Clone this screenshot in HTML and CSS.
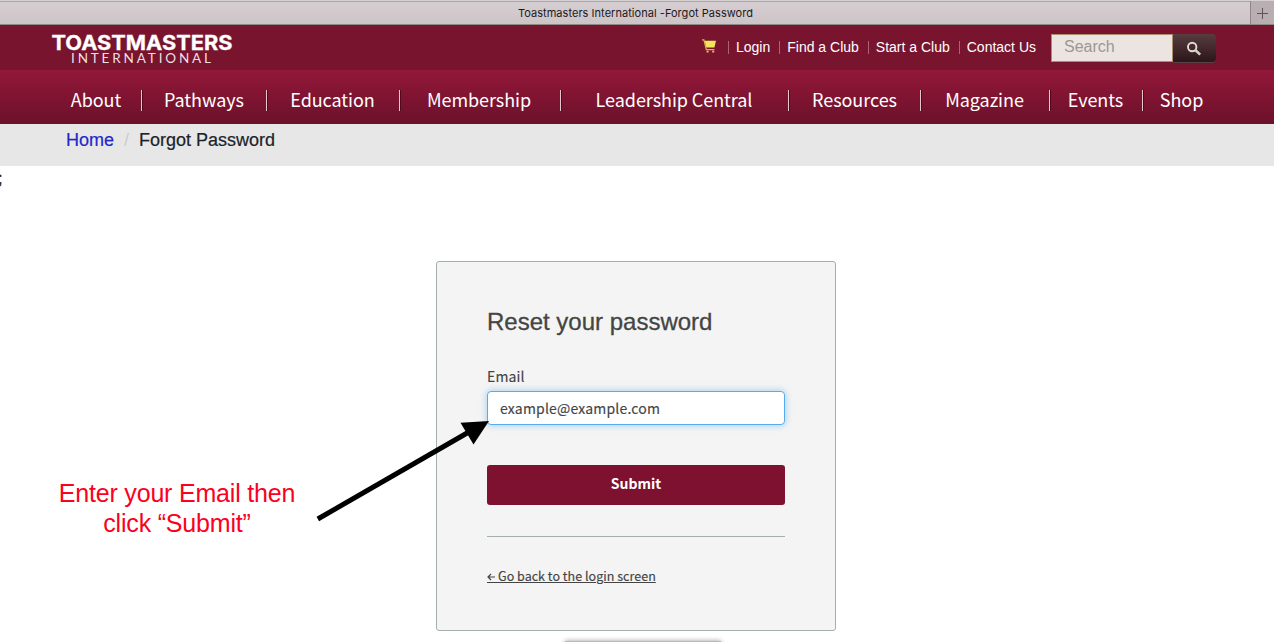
FILE: index.html
```
<!DOCTYPE html>
<html lang="en">
<head>
<meta charset="utf-8">
<title>Toastmasters International -Forgot Password</title>
<link rel="stylesheet" href="styles.css">
</head>
<body>
<div class="tabbar">
  <div class="tab"><span class="tab-title">Toastmasters International -Forgot Password</span></div>
  <div class="new-tab"><svg width="12" height="12" viewBox="0 0 12 12"><path d="M5.5 0V11M0 5.5H11" stroke="#5c5459" stroke-width="1" fill="none"/></svg></div>
</div>
<header class="top">
  <svg class="logo" width="184" height="36" viewBox="0 0 184 36">
    <text class="logo-main" x="0.5" y="18.6" textLength="181" lengthAdjust="spacingAndGlyphs">TOASTMASTERS</text>
    <text class="logo-sub" x="20" y="31.6" textLength="140">INTERNATIONAL</text>
  </svg>
  <div class="tools">
    <svg class="cart" width="15" height="14" viewBox="0 0 15 14"><path d="M0 0.8H1.9L4.3 10.6H12.5" fill="none" stroke="#dcb04c" stroke-width="1.2"/><path d="M2.6 1.8H14L12.4 8.6H4.4Z" fill="#f2e55c"/><path d="M4.6 12.7H6.6M10.2 12.7H12.2" stroke="#e8c658" stroke-width="1.8"/></svg>
    <a class="util">Login</a><a class="util">Find a Club</a><a class="util">Start a Club</a><a class="util">Contact Us</a>
    <div class="search"><div class="search-field">Search</div><div class="search-btn"><svg width="16" height="16" viewBox="0 0 16 16"><circle cx="6.2" cy="6" r="4.2" fill="none" stroke="#e2ddd3" stroke-width="1.9"/><path d="M9.3 9L14.2 13.6" stroke="#d5d0c2" stroke-width="2.6"/></svg></div></div>
  </div>
</header>
<nav class="nav">
  <a class="w1">About</a><a class="w2">Pathways</a><a class="w3">Education</a><a class="w4">Membership</a><a class="w5">Leadership Central</a><a class="w6">Resources</a><a class="w7">Magazine</a><a class="w8">Events</a><a class="w9">Shop</a>
</nav>
<div class="crumbs"><a class="home">Home</a><span class="slash">/</span><span class="here">Forgot Password</span></div>
<main class="main">
  <span class="stray">;</span>
  <section class="card">
    <h1>Reset your password</h1>
    <div class="label">Email</div>
    <div class="field">example@example.com</div>
    <div class="submit">Submit</div>
    <div class="rule"></div>
    <a class="back"><svg class="back-arrow" width="8" height="8" viewBox="0 0 8 8"><path d="M8 4H1M4 1L1 4L4 7" fill="none" stroke="#444" stroke-width="1.2"/></svg>Go back to the login screen</a>
  </section>
  <p class="note">Enter your Email then<br>click “Submit”</p>
  <svg class="arrow" width="180" height="110" viewBox="0 0 180 110"><path d="M7.8 104L158 17.5" stroke="#000" stroke-width="5" fill="none"/><path d="M179 6L150.5 7.8L163.5 29.5Z"/></svg>
  <div class="sheet-edge"></div>
</main>
</body>
</html>
```
FILE: styles.css
```
* { box-sizing: border-box; }
body { margin: 0; width: 1274px; height: 642px; overflow: hidden; background: #fff; font-family: "Liberation Sans", Arial, sans-serif; }
.tabbar { display: flex; height: 25px; border-bottom: 1px solid #8f8a86; background: linear-gradient(#d6cfd2, #cdc4c8); box-shadow: inset 0 1px #d5d0d2, inset 0 2px #aca6a8; }
.tab { flex: 1; text-align: center; padding-left: 21px; }
.tab-title { font: 11px/26px Inter, sans-serif; letter-spacing: 0.04px; color: #1d1820; }
.new-tab { width: 24px; margin-top: 1px; padding: 7px 0 0 6px; border-left: 1px solid #8f8689; background: #b9afb3; }
.new-tab svg { display: block; }
.top { display: flex; justify-content: space-between; height: 45px; background: #79142e; padding: 6px 58px 0 51px; }
.logo { display: block; overflow: visible; }
.logo-main { font: 700 20.5px Inter, sans-serif; fill: #fff; stroke: #fff; stroke-width: 0.3px; }
.logo-sub { font: 400 13.5px Lato, sans-serif; fill: #f0dfe3; }
.tools { display: flex; }
.cart { margin: 8px 11px 0 0; }
.util { height: 13px; margin-top: 10px; padding-left: 7px; margin-right: 9px; border-left: 1px solid #b0607a; font-size: 14px; line-height: 12px; color: #fff; white-space: nowrap; }
.search { display: flex; margin: 3px 0 0 6px; }
.search-field { width: 122px; height: 28px; border: 1px solid #a98f6d; background: #ebe4e0; padding-left: 12px; font-size: 16px; line-height: 24px; color: #9b9897; }
.search-btn { width: 43px; height: 29px; padding: 7px 0 0 13px; border-radius: 0 4px 4px 0; border-bottom: 1px solid #594044; background: linear-gradient(#573c40, #2b1619); }
.nav { display: flex; height: 54px; padding: 20px 0 0 51px; background: linear-gradient(#931739, #6c112a); }
.nav a { height: 21px; border-right: 1px solid #e8c6cf; box-shadow: 1px 0 #4f0b1e; font: 18px/18px "Noto Sans CJK JP", sans-serif; letter-spacing: -0.06px; color: #fff; text-align: center; white-space: nowrap; }
.nav .w1 { width: 91px; }
.nav .w2 { width: 125px; }
.nav .w3 { width: 133px; padding-right: 1px; }
.nav .w4 { width: 161px; padding-right: 2px; }
.nav .w5 { width: 228px; padding-right: 1px; }
.nav .w6 { width: 132px; }
.nav .w7 { width: 129px; padding-right: 1px; }
.nav .w8 { width: 93px; padding-right: 1px; }
.nav .w9 { width: 78px; padding-right: 1px; border: 0; box-shadow: none; }
.crumbs { display: flex; height: 42px; padding: 6px 0 0 66px; background: #e7e7e7; font-size: 18px; line-height: 20px; }
.home { color: #2229c9; -webkit-text-stroke: 0.2px; }
.slash { width: 25px; text-align: center; color: #ccc; }
.here { color: #1b2228; -webkit-text-stroke: 0.2px; }
.main { position: relative; height: 476px; overflow: hidden; }
.stray { position: absolute; left: -2px; top: 3px; font-size: 16px; line-height: 20px; color: #222; -webkit-text-stroke: 0.4px; }
.card { width: 400px; height: 370px; margin: 95px 0 0 436px; border: 1px solid #a3b0ac; border-radius: 3px; background: #f4f4f4; padding: 44px 50px 0; color: #444; font-family: "Noto Sans CJK JP", sans-serif; }
h1 { margin: 0; font: 400 24px/32px "Liberation Sans", Arial, sans-serif; -webkit-text-stroke: 0.3px; }
.label { margin-top: 28px; font-size: 14px; line-height: 20px; letter-spacing: 0.15px; -webkit-text-stroke: 0.15px; }
.field { height: 34px; margin-top: 5px; border: 1px solid #58acee; border-radius: 4px; background: #fff; box-shadow: 0 0 7px rgba(88,172,238,.6); padding-left: 12px; font-size: 14px; line-height: 33px; letter-spacing: 0.18px; -webkit-text-stroke: 0.15px; }
.submit { height: 40px; margin-top: 40px; border-radius: 3px; background: #7d112f; color: #fff; font-size: 14px; font-weight: 700; line-height: 37px; text-align: center; }
.rule { margin-top: 31px; height: 1px; background: #a3b0ac; }
.back { display: inline-block; margin-top: 29px; background: linear-gradient(#444, #444) 0 16px / 12px 1px no-repeat; font-size: 12.5px; line-height: 20px; text-decoration: underline; white-space: nowrap; letter-spacing: 0.03px; -webkit-text-stroke: 0.15px; }
.back-arrow { margin-right: 3px; }
.note { position: absolute; left: 27px; top: 312px; width: 300px; margin: 0; font-size: 25px; line-height: 30px; letter-spacing: -0.19px; color: #fb0020; text-align: center; }
.arrow { position: absolute; left: 310px; top: 249px; }
.sheet-edge { position: absolute; left: 565px; top: 475px; width: 156px; height: 8px; background: #bbb; box-shadow: 0 0 5px #999; }
```
